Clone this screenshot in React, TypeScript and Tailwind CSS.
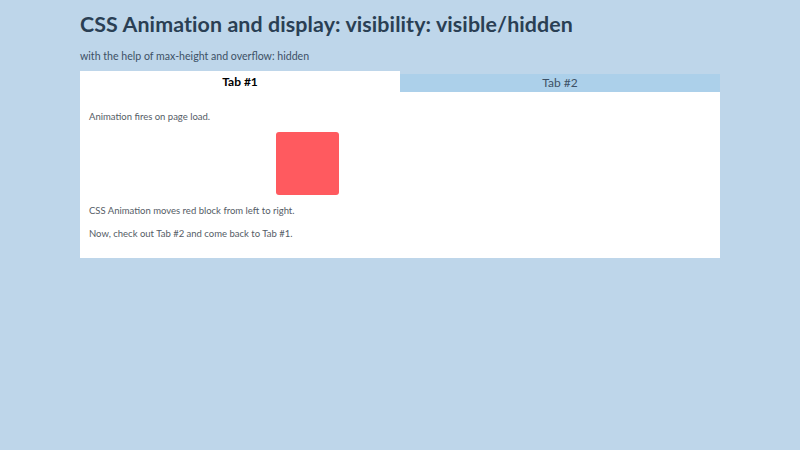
import React from "react";

export default function App() {
  return (
    <div className="min-h-[450px] w-full bg-[#bed6ea] font-['Lato','Open_Sans',sans-serif] text-[#2c3e50]">
      <div className="mx-auto w-[640px] pt-[10px]">
        <h1 className="text-[21.4px] font-bold leading-[28px] tracking-[0.1px] text-[#2a3f54]">
          CSS Animation and display: visibility: visible/hidden
        </h1>
        <p className="mt-[11px] text-[10.6px] leading-[15px] text-[#3d5166]">
          with the help of max-height and overflow: hidden
        </p>
        <div className="mt-[7px] flex items-end">
          <div className="flex h-[21px] w-[320px] items-center justify-center bg-white text-[12px] font-bold text-black">
            Tab #1
          </div>
          <div className="flex h-[18px] w-[320px] items-center justify-center bg-[#acd0ea] text-[12px] text-[#3d5166]">
            Tab #2
          </div>
        </div>
        <div className="h-[166px] bg-white px-[9px] pt-[19px] text-[9.5px] text-[#555c66]">
          <p className="leading-[12px]">Animation fires on page load.</p>
          <div className="ml-[187px] mt-[9px] h-[63px] w-[63px] rounded-[3px] bg-[#ff5a5f]" />
          <p className="mt-[10px] leading-[12px]">CSS Animation moves red block from left to right.</p>
          <p className="mt-[11px] leading-[12px]">Now, check out Tab #2 and come back to Tab #1.</p>
        </div>
      </div>
    </div>
  );
}
